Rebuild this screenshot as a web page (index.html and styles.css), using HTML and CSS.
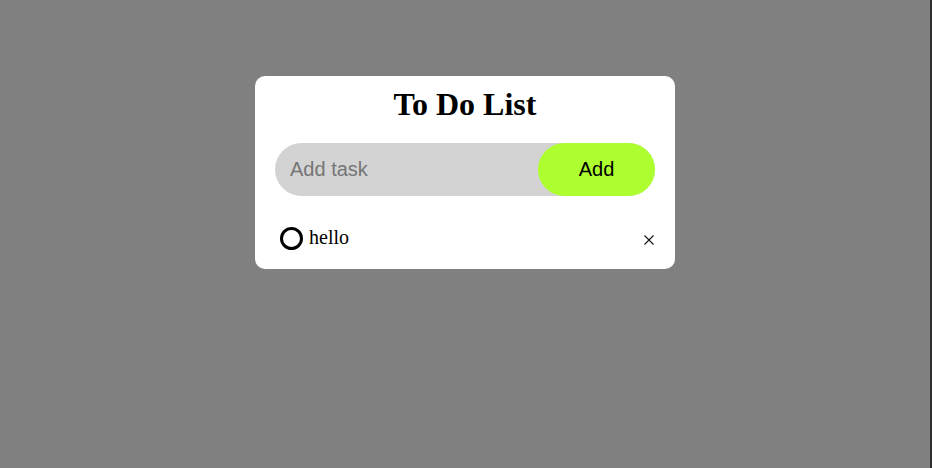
FILE: index.html
```html
<!DOCTYPE html>
<html lang="en">
<head>
<meta charset="utf-8">
<title>To Do List</title>
<link rel="stylesheet" href="styles.css">
</head>
<body>
  <main class="page">
    <section class="card">
      <h1 class="title">To Do List</h1>
      <form class="add-row" onsubmit="return false">
        <input class="add-input" type="text" placeholder="Add task">
        <button class="add-btn" type="submit">Add</button>
      </form>
      <ul class="tasks">
        <li class="task">
          <span class="check"></span>
          <span class="task-text">hello</span>
          <span class="remove" aria-label="remove">
            <svg width="10" height="10" viewBox="0 0 10 10"><path d="M0.5 0.5 L9.5 9.5 M9.5 0.5 L0.5 9.5" stroke="#111" stroke-width="1.1" fill="none"/></svg>
          </span>
        </li>
      </ul>
    </section>
  </main>
</body>
</html>
```
FILE: styles.css
```css
html {
  background: #808080;
  border-right: 2px solid #2f2f2f;
  height: 100%;
  box-sizing: border-box;
}
body {
  margin: 0;
  font-family: "Liberation Serif", "Times New Roman", serif;
}
.page {
  display: flex;
  justify-content: center;
  padding-top: 76px;
}
.card {
  width: 420px;
  box-sizing: border-box;
  background: #fff;
  border-radius: 10px;
  padding: 10px 20px 10px;
}
.title {
  margin: 0;
  text-align: center;
  font-size: 32px;
  line-height: 36px;
  font-weight: bold;
  color: #000;
}
.add-row {
  display: flex;
  align-items: stretch;
  height: 53px;
  margin: 21px 0 0;
  background: #d3d3d3;
  border-radius: 27px;
}
.add-input {
  flex: 1;
  min-width: 0;
  border: none;
  outline: none;
  background: transparent;
  padding: 0 0 0 15px;
  font-family: "Liberation Sans", Arial, sans-serif;
  font-size: 20px;
  color: #000;
}
.add-input::placeholder {
  color: #757575;
}
.add-btn {
  width: 117px;
  border: none;
  outline: none;
  background: #adff2f;
  border-radius: 27px;
  font-family: "Liberation Sans", Arial, sans-serif;
  font-size: 20px;
  color: #000;
  padding: 0;
  cursor: pointer;
}
.tasks {
  list-style: none;
  margin: 23px 0 0;
  padding: 0;
}
.task {
  display: flex;
  align-items: center;
  height: 40px;
  padding-left: 5px;
}
.check {
  width: 23px;
  height: 23px;
  box-sizing: border-box;
  border: 3px solid #000;
  border-radius: 50%;
  margin-right: 6px;
  margin-top: -1px;
}
.task-text {
  flex: 1;
  font-size: 20px;
  line-height: 20px;
  padding-bottom: 4px;
  color: #000;
}
.remove {
  display: flex;
  width: 10px;
  height: 10px;
  margin-right: 1px;
  margin-top: 2px;
}
```
